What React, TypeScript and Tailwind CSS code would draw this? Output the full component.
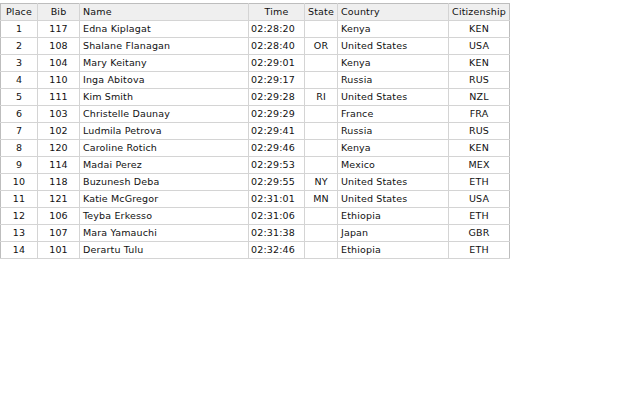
const rows = [
  [1, 117, 'Edna Kiplagat', '02:28:20', '', 'Kenya', 'KEN'],
  [2, 108, 'Shalane Flanagan', '02:28:40', 'OR', 'United States', 'USA'],
  [3, 104, 'Mary Keitany', '02:29:01', '', 'Kenya', 'KEN'],
  [4, 110, 'Inga Abitova', '02:29:17', '', 'Russia', 'RUS'],
  [5, 111, 'Kim Smith', '02:29:28', 'RI', 'United States', 'NZL'],
  [6, 103, 'Christelle Daunay', '02:29:29', '', 'France', 'FRA'],
  [7, 102, 'Ludmila Petrova', '02:29:41', '', 'Russia', 'RUS'],
  [8, 120, 'Caroline Rotich', '02:29:46', '', 'Kenya', 'KEN'],
  [9, 114, 'Madai Perez', '02:29:53', '', 'Mexico', 'MEX'],
  [10, 118, 'Buzunesh Deba', '02:29:55', 'NY', 'United States', 'ETH'],
  [11, 121, 'Katie McGregor', '02:31:01', 'MN', 'United States', 'USA'],
  [12, 106, 'Teyba Erkesso', '02:31:06', '', 'Ethiopia', 'ETH'],
  [13, 107, 'Mara Yamauchi', '02:31:38', '', 'Japan', 'GBR'],
  [14, 101, 'Derartu Tulu', '02:32:46', '', 'Ethiopia', 'ETH'],
];

// column widths incl. right border
const cols = [37, 42, 169, 56, 33, 111, 61];

export default function App() {
  const cell = 'h-[17px] border border-[#d4d4d4] p-0 leading-[16px] whitespace-nowrap';
  return (
    <div className="bg-white w-[640px] h-[400px] pt-[3px] text-[#111]" style={{ fontFamily: '"DejaVu Sans", Verdana, sans-serif' }}>
      <table className="table-fixed border-collapse w-[509px] text-[9.5px] tracking-[0.15px]">
        <colgroup>
          {cols.map((w, i) => (
            <col key={i} style={{ width: w }} />
          ))}
        </colgroup>
        <thead>
          <tr className="bg-[#efefef]">
            <th className={`${cell} font-normal text-center border-t-[#bdbdbd] border-l-[#bdbdbd]`}>Place</th>
            <th className={`${cell} font-normal text-center border-t-[#bdbdbd]`}>Bib</th>
            <th className={`${cell} font-normal text-left pl-[3px] border-t-[#bdbdbd]`}>Name</th>
            <th className={`${cell} font-normal text-center border-t-[#bdbdbd]`}>Time</th>
            <th className={`${cell} font-normal text-center border-t-[#bdbdbd]`}>State</th>
            <th className={`${cell} font-normal text-left pl-[3px] border-t-[#bdbdbd]`}>Country</th>
            <th className={`${cell} font-normal text-center border-t-[#bdbdbd] border-r-[#bdbdbd]`}>Citizenship</th>
          </tr>
        </thead>
        <tbody>
          {rows.map((r) => (
            <tr key={r[0]}>
              <td className={`${cell} text-center border-l-[#bdbdbd]`}>{r[0]}</td>
              <td className={`${cell} text-center`}>{r[1]}</td>
              <td className={`${cell} pl-[3px]`}>{r[2]}</td>
              <td className={`${cell} pl-[2px]`}>{r[3]}</td>
              <td className={`${cell} text-center`}>{r[4]}</td>
              <td className={`${cell} pl-[3px]`}>{r[5]}</td>
              <td className={`${cell} text-center border-r-[#bdbdbd]`}>{r[6]}</td>
            </tr>
          ))}
        </tbody>
      </table>
    </div>
  );
}
